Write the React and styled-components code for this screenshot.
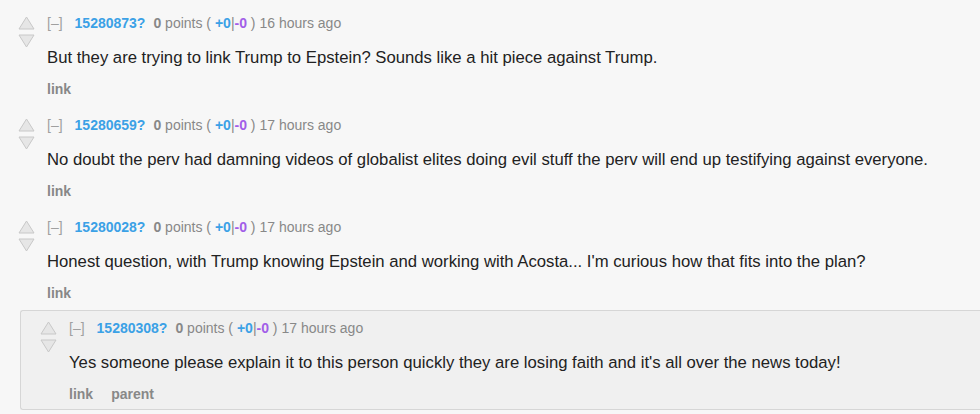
import React from 'react';
import styled, { createGlobalStyle } from 'styled-components';

// * --------- GLOBAL --------- *
const GlobalStyle = createGlobalStyle`
    html, body {
        margin: 0;
        padding: 0;
        background: #f7f7f7;
        font-family: "Liberation Sans", Arial, sans-serif;
    }
`;

// * ---------- STYLE ---------- *
const Listing = styled.div`
    padding: 13px 0 0 18px;
    overflow: hidden;
`;

const CommentBox = styled.div`
    display: flex;
    flex-direction: column;
    ${p => p.$child && `
        background: #f0f0f0;
        border: 1px solid #d6d6d6;
        border-right: none;
        border-radius: 3px 0 0 3px;
        margin: 8px 0 0 2px;
        padding: 7px 0 6px 19px;
    `}
`;

const Entry = styled.div`
    display: flex;
    align-items: flex-start;
`;

const Votes = styled.div`
    display: flex;
    flex-direction: column;
    gap: 4px;
    width: 17px;
    margin-top: 3px;
    margin-right: 12px;
`;

const Content = styled.div`
    display: flex;
    flex-direction: column;
    min-width: 0;
`;

const Tagline = styled.div`
    font-size: 14px;
    line-height: 20px;
    color: #888;
    white-space: nowrap;
`;

const Toggle = styled.span`
    color: #a0a0a0;
    margin-right: 12px;
`;

const Author = styled.span`
    color: #3ba1e6;
    font-weight: bold;
    margin-right: 8px;
`;

const Score = styled.b`
    color: #888;
`;

const Vote = styled.b`
    color: ${p => (p.$down ? '#a25ee8' : '#3ba1e6')};
`;

const Body = styled.p`
    margin: 13px 0 0;
    font-size: 16.7px;
    line-height: 24px;
    color: #222;
    white-space: nowrap;
`;

const Buttons = styled.ul`
    display: flex;
    gap: 18px;
    list-style: none;
    margin: 10px 0 0;
    padding: 0;
    font-size: 14px;
    line-height: 18px;
    font-weight: bold;
    color: #888;
`;

const Spacer = styled.div`
    height: 17px;
`;

const Arrow = ({ down }) => (
    <svg width="17" height="14" viewBox="0 0 17 14">
        <path
            d={down ? 'M1 1 L16 1 L8.5 13 Z' : 'M1 13 L16 13 L8.5 1 Z'}
            fill="#e6e6e6"
            stroke="#c8c8c8"
            strokeWidth="1"
            strokeLinejoin="round"
        />
    </svg>
);

const comments = [
    { id: '15280873?', time: '16 hours ago', text: 'But they are trying to link Trump to Epstein? Sounds like a hit piece against Trump.' },
    { id: '15280659?', time: '17 hours ago', text: 'No doubt the perv had damning videos of globalist elites doing evil stuff the perv will end up testifying against everyone.' },
    { id: '15280028?', time: '17 hours ago', text: "Honest question, with Trump knowing Epstein and working with Acosta... I'm curious how that fits into the plan?" },
];

const reply = { id: '15280308?', time: '17 hours ago', text: "Yes someone please explain it to this person quickly they are losing faith and it's all over the news today!" };

const Comment = ({ c, child, last }) => (
    <CommentBox $child={child}>
        <Entry>
            <Votes>
                <Arrow />
                <Arrow down />
            </Votes>
            <Content>
                <Tagline>
                    <Toggle>[–]</Toggle>
                    <Author>{c.id}</Author>
                    <Score>0</Score> points ( <Vote>+0</Vote>|<Vote $down>-0</Vote> ) {c.time}
                </Tagline>
                <Body>{c.text}</Body>
                <Buttons>
                    <li>link</li>
                    {child && <li>parent</li>}
                </Buttons>
            </Content>
        </Entry>
        {!child && !last && <Spacer />}
    </CommentBox>
);

const App = () => (
    <>
        <GlobalStyle />
        <Listing>
            {comments.map((c, i) => (
                <Comment key={c.id} c={c} last={i === comments.length - 1} />
            ))}
            <Comment c={reply} child />
        </Listing>
    </>
);

export default App;
